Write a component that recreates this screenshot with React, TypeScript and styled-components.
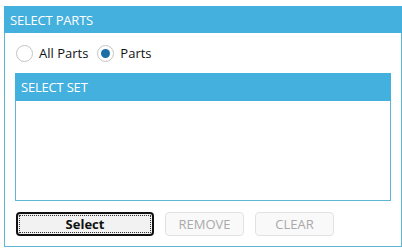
import styled, { createGlobalStyle } from "styled-components";

const GlobalStyle = createGlobalStyle`
  body {
    margin: 0;
    background: #ffffff;
    font-family: "Open Sans", "Noto Sans", sans-serif;
  }
`;

const StyledPanel = styled.div`
  box-sizing: border-box;
  margin: 6px 0 0 4px;
  width: 398px;
  height: 241px;
  border: 1px solid #5db7d3;
  border-top: none;
  display: flex;
  flex-direction: column;
`;

const StyledHeader = styled.div`
  background-color: #44b0de;
  color: #ffffff;
  height: 27px;
  display: flex;
  align-items: center;
  padding-left: 6px;
  font-size: 13px;
  letter-spacing: -0.2px;
  margin: 0 -1px;
`;

const StyledBody = styled.div`
  display: flex;
  flex-direction: column;
  padding: 11px 10px 0 10px;
  flex: 1;
`;

const StyledRadioRow = styled.div`
  display: flex;
  align-items: center;
  height: 18px;
  padding-left: 1px;
  gap: 9px;
`;

const StyledRadioLabel = styled.label`
  display: flex;
  align-items: center;
  gap: 6px;
  font-size: 13px;
  color: #111111;
`;

const StyledRadio = styled.span<{ $checked?: boolean }>`
  box-sizing: border-box;
  width: 17px;
  height: 17px;
  border-radius: 50%;
  border: 1px solid #c4c4c4;
  background: #ffffff;
  display: flex;
  align-items: center;
  justify-content: center;

  &::after {
    content: "";
    width: 9px;
    height: 9px;
    border-radius: 50%;
    background-color: ${({ $checked }) => ($checked ? "#1b6ea6" : "transparent")};
  }
`;

const StyledSetBox = styled.div`
  box-sizing: border-box;
  margin-top: 11px;
  height: 128px;
  width: 376px;
  border: 1px solid #5db7d3;
  border-top: none;
  display: flex;
  flex-direction: column;
`;

const StyledSetHeader = styled.div`
  background-color: #44b0de;
  color: #ffffff;
  height: 28px;
  margin: 0 -1px;
  display: flex;
  align-items: center;
  padding-left: 6px;
  font-size: 13px;
  letter-spacing: -0.2px;
`;

const StyledButtonRow = styled.div`
  display: flex;
  gap: 11px;
  margin-top: 11px;
  padding-left: 1px;
`;

const StyledButton = styled.button<{ $primary?: boolean }>`
  box-sizing: border-box;
  height: 24px;
  width: ${({ $primary }) => ($primary ? "138px" : "79px")};
  border-radius: 4px;
  font-family: "Open Sans", "Noto Sans", sans-serif;
  font-size: 13px;
  font-weight: ${({ $primary }) => ($primary ? 700 : 400)};
  color: ${({ $primary }) => ($primary ? "#111111" : "#a9a9a9")};
  background-color: ${({ $primary }) => ($primary ? "#f2f2f2" : "#f9f9f9")};
  border: ${({ $primary }) => ($primary ? "2px solid #111111" : "1px solid #e2e2e2")};
  outline: ${({ $primary }) => ($primary ? "1px dotted #333333" : "none")};
  outline-offset: -4px;
  padding: 0;
  display: flex;
  align-items: center;
  justify-content: center;
`;

export default function App() {
  return (
    <>
      <GlobalStyle />
      <StyledPanel>
        <StyledHeader>SELECT PARTS</StyledHeader>
        <StyledBody>
          <StyledRadioRow>
            <StyledRadioLabel>
              <StyledRadio />
              All Parts
            </StyledRadioLabel>
            <StyledRadioLabel>
              <StyledRadio $checked />
              Parts
            </StyledRadioLabel>
          </StyledRadioRow>
          <StyledSetBox>
            <StyledSetHeader>SELECT SET</StyledSetHeader>
          </StyledSetBox>
          <StyledButtonRow>
            <StyledButton $primary>Select</StyledButton>
            <StyledButton disabled>REMOVE</StyledButton>
            <StyledButton disabled>CLEAR</StyledButton>
          </StyledButtonRow>
        </StyledBody>
      </StyledPanel>
    </>
  );
}
